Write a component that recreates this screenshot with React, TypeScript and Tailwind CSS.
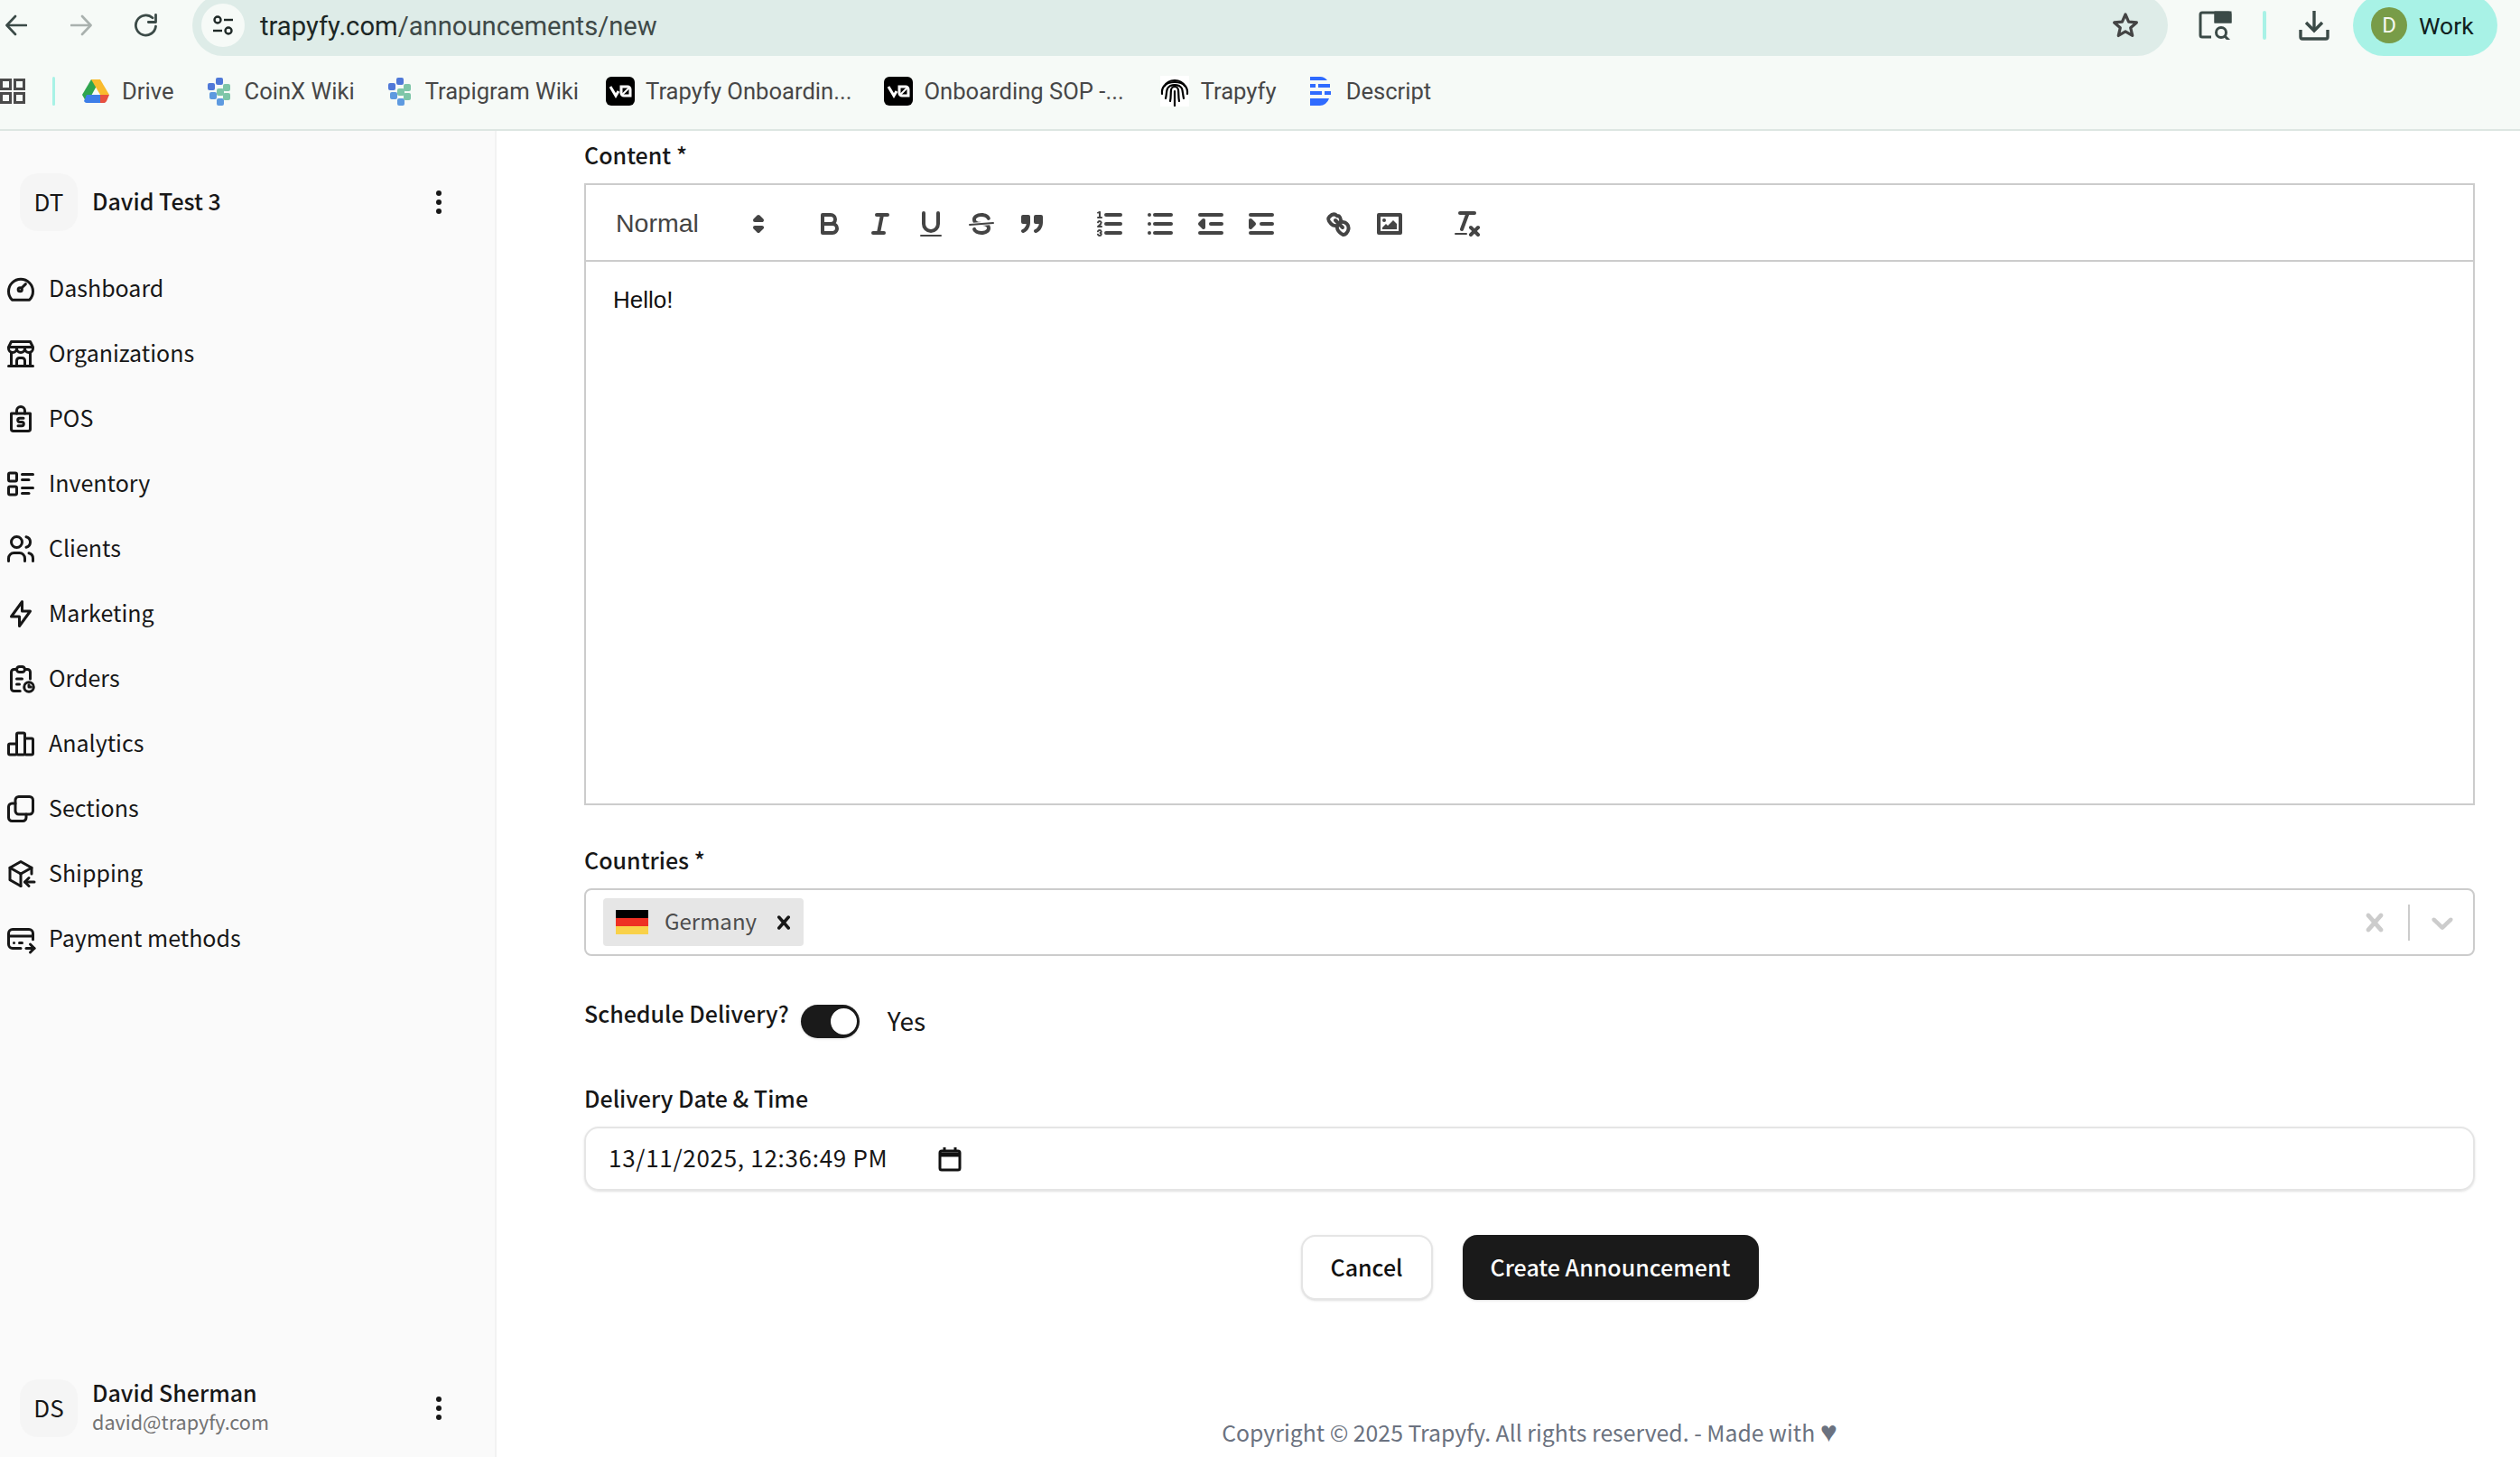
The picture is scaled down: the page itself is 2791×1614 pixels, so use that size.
import React from "react";

const S = ({ size = 36, children, className = "", sw = 2, vb = "0 0 24 24" }: { size?: number; children: React.ReactNode; className?: string; sw?: number; vb?: string }) => (
  <svg width={size} height={size} viewBox={vb} fill="none" stroke="currentColor" strokeWidth={sw} strokeLinecap="round" strokeLinejoin="round" className={`flex-none ${className}`}>
    {children}
  </svg>
);

const navItems: [string, React.ReactNode][] = [
  ["Dashboard", <><path d="M5.6 20.2A9 9 0 1 1 18.4 20.2Z" /><circle cx="11.5" cy="12.5" r="1.4" /><path d="M13 11l2.6-2.6" /></>],
  ["Organizations", <><path d="M3 21h18" /><path d="M3 7v1a3 3 0 0 0 6 0v-1m0 1a3 3 0 0 0 6 0v-1m0 1a3 3 0 0 0 6 0v-1h-18l2-4h14l2 4" /><path d="M5 21V10.85" /><path d="M19 21V10.85" /><path d="M9 21v-4a2 2 0 0 1 2-2h2a2 2 0 0 1 2 2v4" /></>],
  ["POS", <><path d="M5 8h14v11.5a1.5 1.5 0 0 1-1.5 1.5h-11A1.5 1.5 0 0 1 5 19.500Z" /><path d="M9 8V6a3 3 0 0 1 6 0v2" /><path d="M14 11.500h-2.800a1.400 1.400 0 0 0 0 2.800h1.600a1.400 1.400 0 0 1 0 2.800H10" /></>],
  ["Inventory", <><path d="M13 5h8" /><path d="M13 9h5" /><path d="M13 15h8" /><path d="M13 19h5" /><rect x="3" y="4" width="6" height="6" rx="1" /><rect x="3" y="14" width="6" height="6" rx="1" /></>],
  ["Clients", <><circle cx="9" cy="7" r="4" /><path d="M3 21v-2a4 4 0 0 1 4-4h4a4 4 0 0 1 4 4v2" /><path d="M16 3.130a4 4 0 0 1 0 7.750" /><path d="M21 21v-2a4 4 0 0 0-3-3.850" /></>],
  ["Marketing", <path d="M13 3v7h6l-8 11v-7H5l8-11" />],
  ["Orders", <><path d="M9 5H7a2 2 0 0 0-2 2v12a2 2 0 0 0 2 2h4.500" /><path d="M15 5h2a2 2 0 0 1 2 2v5" /><rect x="9" y="3" width="6" height="4" rx="2" /><path d="M9 12h4" /><path d="M9 16h2" /><circle cx="18" cy="18" r="3.500" /><path d="M18 16.500V18h1.500" /></>],
  ["Analytics", <><path d="M3 13a1 1 0 0 1 1-1h4a1 1 0 0 1 1 1v6a1 1 0 0 1-1 1H4a1 1 0 0 1-1-1z" /><path d="M15 9a1 1 0 0 1 1-1h4a1 1 0 0 1 1 1v10a1 1 0 0 1-1 1h-4a1 1 0 0 1-1-1z" /><path d="M9 5a1 1 0 0 1 1-1h4a1 1 0 0 1 1 1v14a1 1 0 0 1-1 1h-4a1 1 0 0 1-1-1z" /></>],
  ["Sections", <><rect x="8" y="3" width="13" height="13" rx="2.500" /><path d="M16 16v2.500a2.500 2.500 0 0 1-2.500 2.500h-8A2.500 2.500 0 0 1 3 18.500v-8A2.500 2.500 0 0 1 5.500 8H8" /></>],
  ["Shipping", <><path d="M12 21l-8-4.500v-9L12 3l8 4.500v4.500" /><path d="M12 12l8-4.500" /><path d="M12 12v9" /><path d="M12 12L4 7.500" /><path d="M22 18h-7" /><path d="M18 15l-3 3 3 3" /></>],
  ["Payment methods", <><path d="M12 19H6a3 3 0 0 1-3-3V8a3 3 0 0 1 3-3h12a3 3 0 0 1 3 3v4.500" /><path d="M3 10h18" /><path d="M16 19h6" /><path d="M19 16l3 3-3 3" /><path d="M7 15h.01" /><path d="M11 15h2" /></>],
];

const Q = ({ children }: { children: React.ReactNode }) => (
  <span className="flex h-[48px] w-[56px] flex-none items-center justify-center">
    <svg width="36" height="36" viewBox="0 0 18 18" fill="none" stroke="#444444" strokeWidth="2" strokeLinecap="round" strokeLinejoin="round">
      {children}
    </svg>
  </span>
);

const fillNo = { fill: "#444444", stroke: "none" };
const thin = { strokeWidth: 1 };

const Bookmark = ({ icon, label, className = "" }: { icon: React.ReactNode; label: string; className?: string }) => (
  <div className={`flex flex-none items-center ${className}`}>
    {icon}
    <span className="text-[25.600px] leading-[32px] text-[#474747]">{label}</span>
  </div>
);

const Flower = () => (
  <svg width="28" height="32" viewBox="0 0 28 32" className="mr-[14px] flex-none">
    <g fill="#4f78d8">
      <rect x="10" y="1" width="8" height="8" rx="2" />
      <rect x="1" y="7" width="8" height="8" rx="2" />
      <rect x="3" y="17" width="8" height="8" rx="2" fill="#5e9ae0" />
      <rect x="11" y="24" width="8" height="8" rx="2" fill="#5e9ae0" />
    </g>
    <g fill="#7ec6a8">
      <rect x="18" y="8" width="8" height="8" rx="2" />
      <rect x="11" y="13" width="8" height="8" rx="2" />
      <rect x="18" y="18" width="8" height="8" rx="2" />
    </g>
  </svg>
);

const V0 = ({ w }: { w: number }) => (
  <svg width={w} height="32" viewBox={`0 0 ${w} 32`} className="mr-[12px] flex-none">
    <rect width={w} height="32" rx="6" fill="#000000" />
    <g transform={`translate(${w / 2 - 12} 10)`} fill="none" stroke="#ffffff" strokeWidth="3">
      <path d="M1 1l6 10 3-5" />
      <path d="M13 1h7a3 3 0 0 1 3 3v7h-7a3 3 0 0 1-3-3z" />
      <path d="M14 10l8-8" strokeWidth="2" />
    </g>
  </svg>
);

const Dots = () => (
  <svg width="8" height="28" viewBox="0 0 8 28" className="flex-none">
    <circle cx="4" cy="4" r="3" fill="#171717" />
    <circle cx="4" cy="14" r="3" fill="#171717" />
    <circle cx="4" cy="24" r="3" fill="#171717" />
  </svg>
);

const X_PATH = "M14.348 14.849c-0.469 0.469-1.229 0.469-1.697 0l-2.651-3.030-2.651 3.029c-0.469 0.469-1.229 0.469-1.697 0-0.469-0.469-0.469-1.229 0-1.697l2.758-3.15-2.759-3.152c-0.469-0.469-0.469-1.228 0-1.697s1.228-0.469 1.697 0l2.652 3.031 2.651-3.031c0.469-0.469 1.228-0.469 1.697 0s0.469 1.229 0 1.697l-2.758 3.152 2.758 3.15c0.469 0.469 0.469 1.229 0 1.698z";
const CHEV_PATH = "M4.516 7.548c0.436-0.446 1.043-0.481 1.576 0l3.908 3.747 3.908-3.747c0.533-0.481 1.141-0.446 1.574 0 0.436 0.445 0.408 1.197 0 1.615-0.406 0.418-4.695 4.502-4.695 4.502-0.217 0.223-0.502 0.335-0.787 0.335s-0.57-0.112-0.789-0.335c0 0-4.287-4.084-4.695-4.502s-0.436-1.17 0-1.615z";

export default function App() {
  return (
    <div className="flex h-[1614px] w-[2791px] flex-col overflow-hidden bg-white font-['Noto_Sans_CJK_JP','Noto_Sans',sans-serif] text-[#171717]">
      {/* Browser chrome */}
      <header className="h-[145px] flex-none overflow-hidden border-b-2 border-[#dde6e2] bg-[#f6faf7] font-['Roboto',sans-serif]">
        <div className="flex h-[62px] items-start">
          <div className="flex h-[56px] flex-none items-center pl-[6px] text-[#3b4a47]">
            <S size={24} sw={2.6} vb="0 0 24 24"><path d="M23 12H2" /><path d="M11 2L1.500 12 11 22" /></S>
            <S size={24} sw={2.6} className="ml-[48px] text-[#a9b1ae]"><path d="M1 12h21" /><path d="M13 2l9.500 10L13 22" /></S>
            <S size={28} sw={2.4} className="ml-[46px]"><path d="M21 13a9.500 9.500 0 1 1-3-8" /><path d="M21 2v7h-7" /></S>
          </div>
          <div className="-mt-[6px] ml-[37px] flex h-[68px] w-[2188px] flex-none items-center rounded-[34px] bg-[#deece8] pl-[10px] pr-[31px]">
            <span className="flex h-[48px] w-[48px] flex-none items-center justify-center rounded-full bg-[#f6faf7]">
              <svg width="24" height="24" viewBox="0 0 24 24" fill="none" stroke="#1f2927" strokeWidth="2.400">
                <circle cx="6" cy="6" r="3.500" /><path d="M13 6h10" /><circle cx="18" cy="18" r="3.500" /><path d="M1 18h10" />
              </svg>
            </span>
            <span className="ml-[17px] mt-[1px] text-[29.200px] leading-[36px] text-[#1c2725]">
              trapyfy.com<span className="text-[#3f4a48]">/announcements/new</span>
            </span>
            <span className="ml-auto flex items-center text-[#444444]">
              <S size={32} sw={2.400}><path d="M12 3l2.700 6.100 6.600.6-5 4.400 1.500 6.500L12 17.200l-5.800 3.400 1.500-6.500-5-4.400 6.600-.6z" /></S>
            </span>
          </div>
          <div className="flex h-[56px] flex-none items-center text-[#3b4a47]">
            <svg width="37" height="32" viewBox="0 0 37 32" fill="none" className="ml-[34px] flex-none" stroke="currentColor" strokeWidth="3">
              <path d="M14 29H4a2 2 0 0 1-2-2V4a2 2 0 0 1 2-2h29a2 2 0 0 1 2 2v8H19V2" />
              <path d="M19 2h16v10H19z" fill="currentColor" />
              <circle cx="25" cy="24" r="5.500" />
              <path d="M29 28l5 5" />
            </svg>
            <span className="ml-[34px] h-[32px] w-[4px] flex-none rounded-full bg-[#a8f2e6]" />
            <svg width="34" height="34" viewBox="0 0 34 34" fill="none" className="ml-[36px] flex-none" stroke="currentColor" strokeWidth="3.400">
              <path d="M17 1v21" /><path d="M8 14l9 9 9-9" /><path d="M2 22v8a2 2 0 0 0 2 2h26a2 2 0 0 0 2-2v-8" />
            </svg>
          </div>
          <div className="-mt-[6px] ml-[26px] flex h-[68px] w-[160px] flex-none items-center rounded-[34px] bg-[#a8f2e6] pl-[20px]">
            <span className="flex h-[40px] w-[40px] flex-none items-center justify-center rounded-full bg-[#789c48] text-[24px] text-[#f4f8ee]">D</span>
            <span className="ml-[13px] mt-[1px] text-[26.500px] leading-[34px] text-[#10201d]">Work</span>
          </div>
        </div>
        <div className="flex h-[81px] items-center pb-[3px]">
          <svg width="28" height="28" viewBox="0 0 28 28" fill="none" stroke="#4a4a4a" strokeWidth="3" className="flex-none">
            <rect x="1.500" y="1.500" width="10" height="10" /><rect x="16.500" y="1.500" width="10" height="10" /><rect x="1.500" y="16.500" width="10" height="10" /><rect x="16.500" y="16.500" width="10" height="10" />
          </svg>
          <span className="ml-[30px] h-[32px] w-[3px] flex-none rounded-full bg-[#a8f2e6]" />
          <Bookmark
            className="ml-[30px]"
            label="Drive"
            icon={
              <svg width="30" height="28" viewBox="0 0 30 28" className="mr-[14px] flex-none">
                <path d="M10 1h10L10 19 5 27 0 18z" fill="#2fa54f" />
                <path d="M10 1h10l10 17H20z" fill="#f9bb2d" />
                <path d="M5 18h20v9H5a4 4 0 0 1-3-2z" fill="#3d7ee8" />
                <path d="M20 18h10l-3 7a4 4 0 0 1-3 2h-4z" fill="#e8503f" />
              </svg>
            }
          />
          <Bookmark className="ml-[36px]" label="CoinX Wiki" icon={<Flower />} />
          <Bookmark className="ml-[36px]" label="Trapigram Wiki" icon={<Flower />} />
          <Bookmark className="ml-[30px]" label="Trapyfy Onboardin..." icon={<V0 w={32} />} />
          <Bookmark className="ml-[36px]" label="Onboarding SOP -..." icon={<V0 w={32} />} />
          <Bookmark
            className="ml-[40px]"
            label="Trapyfy"
            icon={
              <span className="mr-[13px] flex h-[34px] w-[32px] flex-none items-center justify-center bg-white text-[#000000]">
                <svg width="32" height="34" viewBox="0 0 32 34" fill="none" stroke="currentColor" strokeWidth="2.200" strokeLinecap="round">
                  <path d="M5 11a12 10 0 0 1 22 0" />
                  <path d="M2 20c-.6-6 2-13 14-13s14.600 7 14 13" />
                  <path d="M6 25c1-4 .8-8 2-11a9 7 0 0 1 16 0c1 3 1 7 2 11" />
                  <path d="M11 28c1-4 .5-9 1-12a4 4 0 0 1 8 0c.5 3 0 8 1 12" />
                  <path d="M16 17v16" />
                </svg>
              </span>
            }
          />
          <Bookmark
            className="ml-[36px]"
            label="Descript"
            icon={
              <svg width="24" height="32" viewBox="0 0 24 32" fill="#2f6bff" className="mr-[17px] flex-none">
                <path d="M1 0h10a11 11 0 0 1 9 4H1z" />
                <path d="M1 8h6v4H1zM10 8h13v4H10z" />
                <path d="M1 16h13v4H1zM17 16h7v4h-7z" />
                <path d="M1 24h21a11 11 0 0 1-11 8H1z" />
              </svg>
            }
          />
        </div>
      </header>

      <div className="flex min-h-0 flex-1">
        {/* Sidebar */}
        <aside className="flex w-[550px] flex-none flex-col justify-between border-r-2 border-[#f2f2f2] bg-[#fafafa] pb-[22px] pt-[47px]">
          <div>
            <div className="flex h-[64px] items-center pl-[22px] pr-[58px]">
              <span className="flex h-[64px] w-[64px] flex-none items-center justify-center rounded-[20px] bg-[#f5f5f5] pb-[3px] text-[26px]">DT</span>
              <span className="mb-[4px] ml-[16px] flex-1 text-[25px] font-medium leading-[36px]">David Test 3</span>
              <Dots />
            </div>
            <nav className="mt-[28px] flex flex-col pl-[5px]">
              {navItems.map(([label, icon]) => (
                <div key={label} className="flex h-[72px] items-center gap-[13px]">
                  <S size={36}>{icon}</S>
                  <span className="mb-[4px] text-[25px] leading-[36px]">{label}</span>
                </div>
              ))}
            </nav>
          </div>
          <div className="flex h-[64px] items-center pl-[22px] pr-[58px]">
            <span className="flex h-[64px] w-[64px] flex-none items-center justify-center rounded-[20px] bg-[#f5f5f5] pb-[3px] text-[26px]">DS</span>
            <div className="mb-[4px] ml-[16px] flex flex-1 flex-col">
              <span className="text-[25px] font-medium leading-[34px]">David Sherman</span>
              <span className="text-[21.600px] leading-[32px] text-[#737373]">david@trapyfy.com</span>
            </div>
            <Dots />
          </div>
        </aside>

        {/* Main */}
        <main className="min-w-0 flex-1 pl-[97px] pr-[50px] pt-[8px]">
          <label className="block h-[40px] text-[25px] font-medium leading-[36px]">Content *</label>
          <div className="mt-[10px] flex h-[689px] flex-col border-2 border-[#cccccc]">
            <div className="flex h-[85px] flex-none items-center border-b-2 border-[#cccccc] pl-[16px] pt-[2px]">
              <div className="relative mr-[30px] flex h-[48px] w-[196px] flex-none items-center pl-[17px] font-['Liberation_Sans',sans-serif] text-[28.500px] text-[#444444]">
                Normal
                <svg width="36" height="36" viewBox="0 0 18 18" fill="none" stroke="#444444" strokeWidth="2" strokeLinejoin="round" className="absolute right-[3px] top-[6px]">
                  <polygon points="7 11 9 13 11 11 7 11" /><polygon points="7 7 9 5 11 7 7 7" />
                </svg>
              </div>
              <Q><path d="M5,4H9.5A2.5,2.5,0,0,1,12,6.5v0A2.5,2.5,0,0,1,9.5,9H5A0,0,0,0,1,5,9V4A0,0,0,0,1,5,4Z" /><path d="M5,9h5.5A2.5,2.5,0,0,1,13,11.5v0A2.5,2.5,0,0,1,10.5,14H5a0,0,0,0,1,0,0V9A0,0,0,0,1,5,9Z" /></Q>
              <Q><line x1="7" x2="13" y1="4" y2="4" /><line x1="5" x2="11" y1="14" y2="14" /><line x1="8" x2="10" y1="14" y2="4" /></Q>
              <Q><path d="M5,3V9a4.012,4.012,0,0,0,4,4H9a4.012,4.012,0,0,0,4-4V3" /><rect {...fillNo} height="1" rx=".5" ry=".5" width="12" x="3" y="15" /></Q>
              <Q>
                <line {...thin} x1="15.5" x2="2.5" y1="8.5" y2="9.5" />
                <path {...fillNo} d="M9.007,8C6.542,7.791,6,7.519,6,6.5,6,5.792,7.283,5,9,5c1.571,0,2.765.679,2.969,1.309a1,1,0,0,0,1.9-.617C13.356,4.106,11.354,3,9,3,6.2,3,4,4.538,4,6.5a3.2,3.2,0,0,0,.5,1.843Z" />
                <path {...fillNo} d="M8.984,10C11.457,10.208,12,10.479,12,11.5c0,.708-1.283,1.5-3,1.5-1.571,0-2.765-.679-2.969-1.309a1,1,0,1,0-1.9.617C4.644,13.894,6.646,15,9,15c2.8,0,5-1.538,5-3.5a3.2,3.2,0,0,0-.5-1.843Z" />
              </Q>
              <Q>
                <rect fill="#444444" height="3" width="3" x="4" y="5" /><rect fill="#444444" height="3" width="3" x="11" y="5" />
                <path fill="#444444" d="M7,8c0,4.031-3,5-3,5" /><path fill="#444444" d="M14,8c0,4.031-3,5-3,5" />
              </Q>
              <span className="w-[30px] flex-none" />
              <Q>
                <line x1="7" x2="15" y1="4" y2="4" /><line x1="7" x2="15" y1="9" y2="9" /><line x1="7" x2="15" y1="14" y2="14" />
                <line {...thin} x1="2.5" x2="4.5" y1="5.5" y2="5.5" />
                <path {...fillNo} d="M3.5,6A0.5,0.5,0,0,1,3,5.5V3.085l-0.276.138A0.5,0.5,0,0,1,2.053,3c-0.124-.247-0.023-0.324.224-0.447l1-.5A0.5,0.5,0,0,1,4,2.5v3A0.5,0.5,0,0,1,3.5,6Z" />
                <path {...thin} d="M4.5,10.5h-2c0-.234,1.85-1.076,1.85-2.234A0.959,0.959,0,0,0,2.5,8.156" />
                <path {...thin} d="M2.5,14.846a0.959,0.959,0,0,0,1.85-.109A0.7,0.7,0,0,0,3.75,14a0.688,0.688,0,0,0,.6-0.736,0.959,0.959,0,0,0-1.85-.109" />
              </Q>
              <Q><line x1="6" x2="15" y1="4" y2="4" /><line x1="6" x2="15" y1="9" y2="9" /><line x1="6" x2="15" y1="14" y2="14" /><line x1="3" x2="3" y1="4" y2="4" /><line x1="3" x2="3" y1="9" y2="9" /><line x1="3" x2="3" y1="14" y2="14" /></Q>
              <Q><line x1="3" x2="15" y1="14" y2="14" /><line x1="3" x2="15" y1="4" y2="4" /><line x1="9" x2="15" y1="9" y2="9" /><polyline points="5 7 5 11 3 9 5 7" fill="#444444" /></Q>
              <Q><line x1="3" x2="15" y1="14" y2="14" /><line x1="3" x2="15" y1="4" y2="4" /><line x1="9" x2="15" y1="9" y2="9" /><polyline points="3 7 3 11 5 9 3 7" fill="#444444" /></Q>
              <span className="w-[30px] flex-none" />
              <Q>
                <line x1="7" x2="11" y1="7" y2="11" />
                <path d="M8.9,4.577a3.476,3.476,0,0,1,.36,4.679A3.476,3.476,0,0,1,4.577,8.9C3.185,7.5,2.35,6.4,3.75,5S6.5,3.185,7.9,4.577Z" />
                <path d="M13.423,9.1a3.476,3.476,0,0,0-4.679-.36,3.476,3.476,0,0,0,.36,4.679c1.392,1.392,2.5,2.227,3.9.827S14.815,10.5,13.423,9.1Z" />
              </Q>
              <Q>
                <rect height="10" width="12" x="3" y="4" />
                <circle {...fillNo} cx="6" cy="7" r="1" />
                <polyline {...fillNo} points="5 12 5 11 7 9 8 10 11 7 13 9 13 12 5 12" />
              </Q>
              <span className="w-[30px] flex-none" />
              <Q>
                <line x1="5" x2="13" y1="3" y2="3" /><line x1="6" x2="9.35" y1="12" y2="3" /><line x1="11" x2="15" y1="11" y2="15" /><line x1="15" x2="11" y1="11" y2="15" />
                <rect {...fillNo} height="1" rx=".5" ry=".5" width="7" x="2" y="14" />
              </Q>
            </div>
            <div className="flex-1 px-[30px] pt-[23px] font-['Liberation_Sans',sans-serif] text-[26px] leading-[38px] text-[#111111]">Hello!</div>
          </div>

          <label className="mt-[42px] block h-[40px] text-[25px] font-medium leading-[36px]">Countries *</label>
          <div className="mt-[10px] flex h-[75px] items-center rounded-[8px] border-2 border-[#cccccc] pl-[19px]">
            <div className="flex h-[53px] w-[222px] flex-none items-center rounded-[4px] bg-[#e6e6e6] pl-[14px]">
              <svg width="36" height="27" viewBox="0 0 36 27" className="flex-none">
                <rect width="36" height="9" fill="#000000" /><rect y="9" width="36" height="9" fill="#ee3023" /><rect y="18" width="36" height="9" fill="#f9d149" />
              </svg>
              <span className="mb-[4px] ml-[18px] text-[24px] leading-[34px] text-[#4d4d4d]">Germany</span>
              <svg width="30" height="30" viewBox="0 0 20 20" fill="#171717" className="ml-auto mr-[7px] flex-none"><path d={X_PATH} /></svg>
            </div>
            <div className="ml-auto flex items-center pr-[14px]">
              <svg width="40" height="40" viewBox="0 0 20 20" fill="#cccccc" className="flex-none"><path d={X_PATH} /></svg>
              <span className="ml-[17px] h-[40px] w-[2px] flex-none bg-[#cccccc]" />
              <svg width="40" height="40" viewBox="0 0 20 20" fill="#cccccc" className="ml-[16px] flex-none"><path d={CHEV_PATH} /></svg>
            </div>
          </div>

          <div className="mt-[45px] flex h-[46px] items-start">
            <span className="block h-[40px] text-[25px] font-medium leading-[36px]">Schedule Delivery?</span>
            <span className="ml-[13px] mt-[9px] flex h-[37px] w-[65px] flex-none items-center justify-end rounded-full bg-[#1a1a1a] pr-[1px] shadow-sm">
              <span className="h-[33px] w-[33px] rounded-full border-2 border-[#1a1a1a] bg-white" />
            </span>
            <span className="ml-[31px] mt-[6px] h-[40px] text-[28px] leading-[40px]">Yes</span>
          </div>

          <label className="mt-[48px] block h-[40px] text-[25px] font-medium leading-[36px]">Delivery Date &amp; Time</label>
          <div className="mt-[10px] flex h-[71px] items-center rounded-[16px] border-2 border-[#e5e5e5] pl-[25px] shadow-sm">
            <span className="mb-[3px] w-[367px] flex-none text-[26px] leading-[36px] tracking-[0.700px]">13/11/2025, 12:36:49 PM</span>
            <svg width="28" height="28" viewBox="0 0 28 28" fill="none" stroke="#111111" strokeWidth="3" className="-ml-[3px] flex-none">
              <rect x="3" y="5" width="22" height="21" rx="2" /><path d="M3 9h22" strokeWidth="5" /><path d="M8 1v5M20 1v5" />
            </svg>
          </div>

          <div className="mt-[49px] flex items-center justify-center gap-[33px]">
            <button className="h-[72px] w-[146px] rounded-[16px] border-2 border-[#e5e5e5] bg-white text-[25px] font-medium text-[#111111] shadow-sm">Cancel</button>
            <button className="h-[72px] w-[328px] rounded-[16px] bg-[#1a1a1a] text-[25px] font-medium text-white shadow-sm">Create Announcement</button>
          </div>

          <footer className="mt-[128px] h-[40px] text-center text-[24.800px] leading-[36px] text-[#6b7280]">Copyright © 2025 Trapyfy. All rights reserved. - Made with <span className="font-['Liberation_Sans',sans-serif] text-[32px] leading-[0]">♥</span></footer>
        </main>
      </div>
    </div>
  );
}
